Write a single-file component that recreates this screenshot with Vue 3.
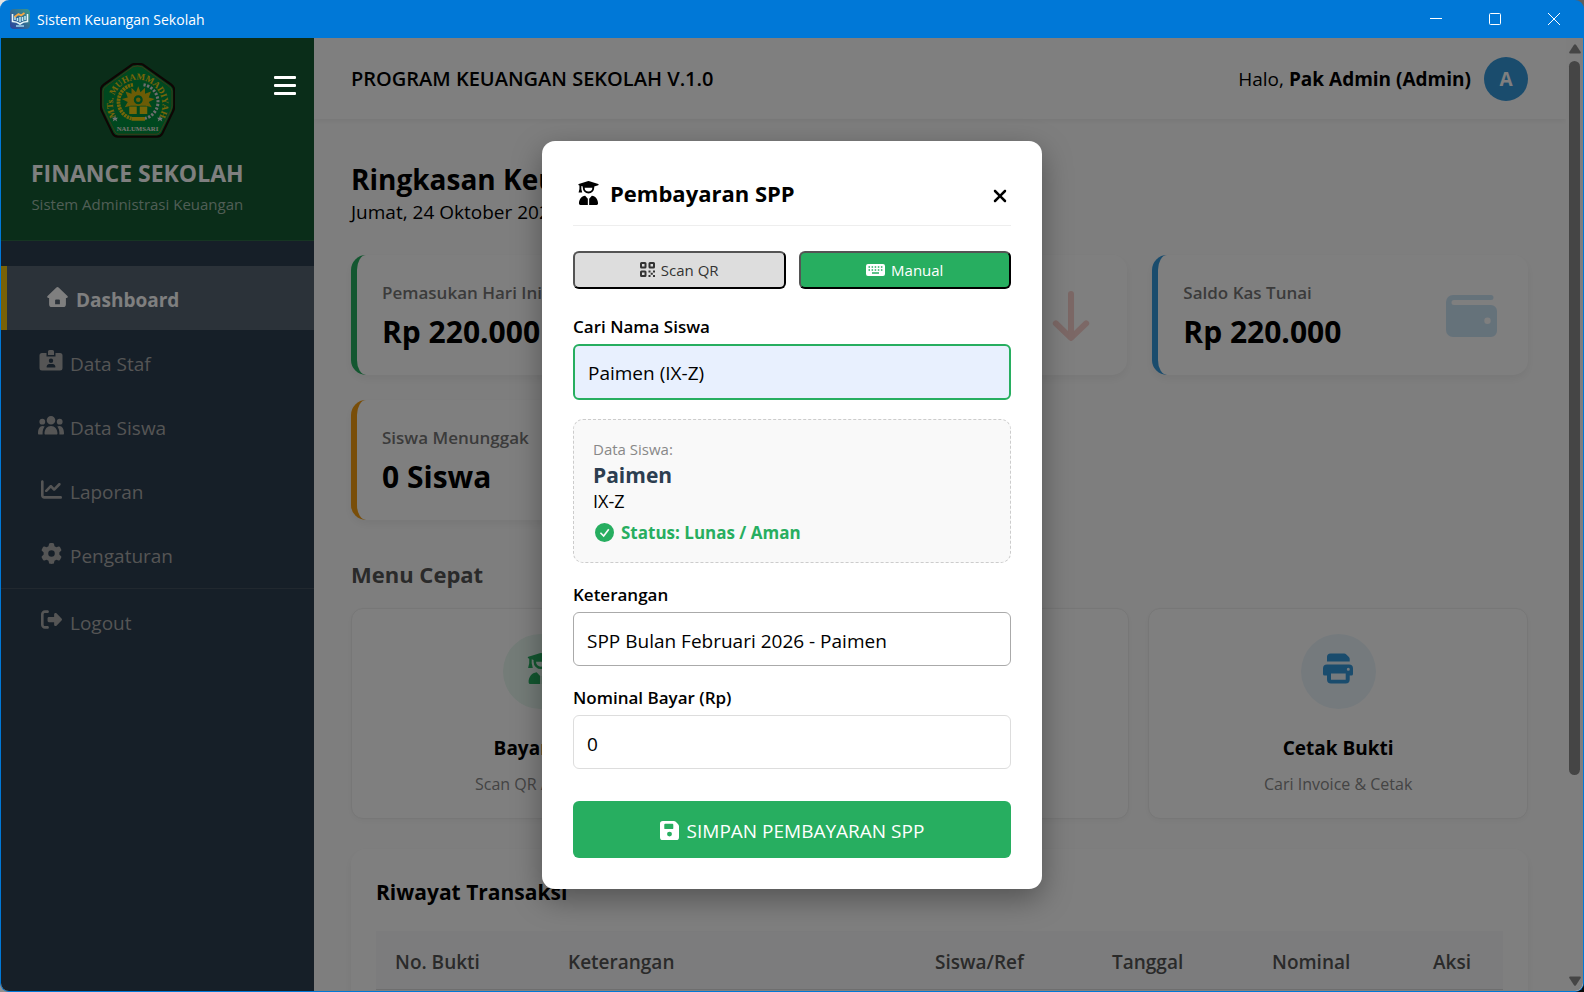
<script setup>
import { ref, reactive } from 'vue';

// Ikon satu warna: [viewBox, path]
const icons = {
    home: ['0 0 22 22', 'M9.6.7a2 2 0 0 1 2.8 0l9 8.6c.9.9.3 2.2-.8 2.2h-.8V18a3 3 0 0 1-3 3H5.2a3 3 0 0 1-3-3v-6.500h-.8c-1.100 0-1.700-1.300-.8-2.200zM9.500 13a1 1 0 0 0-1 1v4h5v-4a1 1 0 0 0-1-1z'],
    staff: ['0 0 24 22', 'M9 1.500A1.500 1.500 0 0 1 10.500 0h3A1.500 1.500 0 0 1 15 1.500V5H9zM3 3h4.500v3.500h9V3H21a2.500 2.500 0 0 1 2.500 2.500V18a2.500 2.500 0 0 1-2.500 2.500H3A2.500 2.500 0 0 1 .5 18V5.500A2.500 2.500 0 0 1 3 3zM12 8.500a2.200 2.200 0 1 0 0 4.400 2.200 2.200 0 0 0 0-4.400zM10.500 14A2.800 2.800 0 0 0 7.700 17.500h8.600A2.800 2.800 0 0 0 13.500 14z'],
    users: ['0 0 26 19', 'M13 0a4.300 4.300 0 1 1 0 8.600A4.300 4.300 0 0 1 13 0zM4.300 2.800a2.900 2.900 0 1 1 0 5.800 2.900 2.900 0 0 1 0-5.800zM21.700 2.800a2.900 2.900 0 1 1 0 5.800 2.900 2.900 0 0 1 0-5.800zM6.500 17.500C6.500 13 9.200 10 13 10s6.500 3 6.500 7.500c0 .5-.4 1-1 1h-11c-.6 0-1-.5-1-1zM0 17.500C0 12.800 1.800 10 4.500 10c.8 0 1.600.2 2.200.5C5.200 12.300 4.500 14.500 4.600 18.500H1c-.6 0-1-.4-1-1zM26 17.500C26 12.800 24.200 10 21.500 10c-.8 0-1.600.2-2.200.5 1.500 1.800 2.200 4 2.100 8H25c.6 0 1-.4 1-1z'],
    chart: ['0 0 512 512', 'M64 64c0-17.7-14.3-32-32-32S0 46.3 0 64V400c0 44.2 35.8 80 80 80H480c17.7 0 32-14.3 32-32s-14.3-32-32-32H80c-8.8 0-16-7.2-16-16V64zm406.600 86.600c12.500-12.500 12.500-32.800 0-45.300s-32.800-12.500-45.300 0L320 210.700l-57.400-57.400c-12.500-12.500-32.800-12.500-45.300 0l-112 112c-12.500 12.500-12.500 32.800 0 45.300s32.800 12.500 45.300 0L240 221.300l57.400 57.400c12.500 12.500 32.800 12.500 45.300 0l128-128z'],
    gear: ['0 0 512 512', 'M495.9 166.6c3.2 8.7 .5 18.4-6.4 24.6l-43.3 39.4c1.1 8.3 1.7 16.8 1.7 25.4s-.6 17.1-1.7 25.4l43.3 39.4c6.9 6.2 9.6 15.9 6.4 24.6c-4.4 11.9-9.7 23.3-15.8 34.3l-4.7 8.1c-6.6 11-14 21.4-22.1 31.2c-5.9 7.2-15.7 9.6-24.5 6.8l-55.7-17.7c-13.4 10.3-28.2 18.9-44 25.4l-12.5 57.1c-2 9.1-9 16.3-18.2 17.8c-13.8 2.3-28 3.5-42.5 3.5s-28.7-1.2-42.5-3.5c-9.2-1.5-16.2-8.7-18.2-17.8l-12.5-57.1c-15.8-6.5-30.6-15.1-44-25.4L83.1 425.9c-8.8 2.8-18.6 .3-24.5-6.8c-8.1-9.8-15.5-20.2-22.1-31.2l-4.7-8.1c-6.1-11-11.4-22.4-15.8-34.3c-3.2-8.7-.5-18.4 6.4-24.6l43.3-39.4C64.6 273.1 64 264.6 64 256s.6-17.1 1.7-25.4L22.4 191.2c-6.9-6.2-9.6-15.9-6.4-24.6c4.4-11.9 9.7-23.3 15.8-34.3l4.7-8.1c6.6-11 14-21.4 22.1-31.2c5.9-7.2 15.7-9.6 24.5-6.8l55.7 17.7c13.4-10.3 28.2-18.9 44-25.4l12.5-57.1c2-9.1 9-16.3 18.2-17.8C227.3 1.2 241.5 0 256 0s28.7 1.2 42.5 3.5c9.2 1.5 16.2 8.7 18.2 17.8l12.5 57.1c15.8 6.5 30.6 15.1 44 25.4l55.7-17.7c8.8-2.8 18.6-.3 24.5 6.8c8.1 9.8 15.5 20.2 22.1 31.2l4.7 8.1c6.1 11 11.4 22.4 15.8 34.3zM256 336a80 80 0 1 0 0-160 80 80 0 1 0 0 160z'],
    logout: ['0 0 512 512', 'M377.9 105.9L500.7 228.7c7.2 7.2 11.3 17.1 11.3 27.3s-4.1 20.1-11.3 27.3L377.900 406.100c-6.400 6.400-15 9.900-24 9.900c-18.700 0-33.900-15.200-33.900-33.900l0-62.100-128 0c-17.700 0-32-14.300-32-32l0-64c0-17.700 14.300-32 32-32l128 0 0-62.100c0-18.700 15.200-33.900 33.900-33.900c9 0 17.600 3.600 24 9.900zM160 96L96 96c-17.700 0-32 14.300-32 32l0 256c0 17.700 14.300 32 32 32l64 0c17.700 0 32 14.300 32 32s-14.300 32-32 32l-64 0c-53 0-96-43-96-96L0 128C0 75 43 32 96 32l64 0c17.700 0 32 14.300 32 32s-14.300 32-32 32z'],
    student: ['0 0 22 25', 'M.8 3 10 .2a3.500 3.500 0 0 1 2 0L21.200 3c.6.2.6 1.100 0 1.300L17 5.600V7a6 6 0 0 1-12 0V5.600l-1.500-.5v3.200L4.400 12H.6l.9-3.700V4.600L.8 4.300C.2 4.100.2 3.200.8 3zM7 7a4 4 0 0 0 8 0z M7.500 15.500 10.300 18.500V25H2.500A1.500 1.500 0 0 1 1 23.500C1 19.500 3.500 16 7.500 15.500zM14.500 15.500 11.700 18.500V25h7.800a1.500 1.500 0 0 0 1.500-1.500c0-4-2.500-7.500-6.500-8z'],
    close: ['0 0 384 512', 'M342.6 150.6c12.5-12.5 12.5-32.8 0-45.3s-32.8-12.500-45.300 0L192 210.700 86.600 105.400c-12.500-12.500-32.800-12.500-45.300 0s-12.500 32.800 0 45.300L146.700 256 41.400 361.400c-12.500 12.500-12.500 32.800 0 45.300s32.800 12.500 45.300 0L192 301.300 297.400 406.600c12.500 12.500 32.800 12.500 45.300 0s12.500-32.800 0-45.300L237.300 256 342.600 150.600z'],
    qr: ['0 0 15 15', 'M1.500 0h3.500a1.500 1.500 0 0 1 1.500 1.500V5A1.500 1.500 0 0 1 5 6.500H1.500A1.500 1.500 0 0 1 0 5V1.500A1.500 1.500 0 0 1 1.500 0zM2 2v2.500h2.500V2zM10 0h3.500A1.500 1.500 0 0 1 15 1.500V5a1.500 1.500 0 0 1-1.500 1.500H10A1.500 1.500 0 0 1 8.500 5V1.500A1.500 1.500 0 0 1 10 0zM10.500 2v2.500H13V2zM1.500 8.500H5A1.500 1.500 0 0 1 6.500 10v3.500A1.500 1.500 0 0 1 5 15H1.500A1.500 1.500 0 0 1 0 13.500V10a1.500 1.500 0 0 1 1.500-1.500zM2 10.500V13h2.500v-2.500zM8.500 8.500h2v2h-2zM13 8.500h2v2h-2zM10.700 10.700h2.100v2.100h-2.100zM8.500 13h2v2h-2zM13 13h2v2h-2z'],
    keyboard: ['0 0 19 12', 'M2 0h15a2 2 0 0 1 2 2v8a2 2 0 0 1-2 2H2a2 2 0 0 1-2-2V2a2 2 0 0 1 2-2zM2.500 2.300v1.500H4V2.300zM5.600 2.300v1.500h1.500V2.300zM8.700 2.300v1.500h1.500V2.300zM11.800 2.300v1.500h1.500V2.300zM14.900 2.300v1.500h1.500V2.300zM2.500 5.200v1.500H4V5.200zM5.600 5.200v1.500h1.500V5.200zM8.700 5.200v1.500h1.500V5.200zM11.800 5.200v1.500h1.500V5.200zM14.900 5.200v1.500h1.500V5.200zM6 8.300v1.500h7V8.300z'],
    check: ['0 0 20 20', 'M10 0a10 10 0 1 1 0 20 10 10 0 0 1 0-20zM13.800 6 9 12.400 6.300 9.700 5.100 10.900 9.200 15 15.200 7z'],
    save: ['0 0 20 20', 'M3 0h11.500a3 3 0 0 1 2.100.9l2.500 2.500A3 3 0 0 1 20 5.500V17a3 3 0 0 1-3 3H3a3 3 0 0 1-3-3V3a3 3 0 0 1 3-3zM5.500 3A1 1 0 0 0 4.500 4v3.500a1 1 0 0 0 1 1h7.500a1 1 0 0 0 1-1V4a1 1 0 0 0-1-1zM10 11.200a2.600 2.600 0 1 0 0 5.200 2.600 2.600 0 0 0 0-5.200z'],
    down: ['0 0 38 50', 'M19 0a3 3 0 0 1 3 3v37l10-9.700a3 3 0 0 1 4.300 4.300L21.100 49.100a3 3 0 0 1-4.200 0L1.700 34.600A3 3 0 0 1 6 30.300L16 40V3a3 3 0 0 1 3-3z'],
    up: ['0 0 38 50', 'M19 50a3 3 0 0 0 3-3V10l10 9.700a3 3 0 0 0 4.300-4.300L21.100.9a3 3 0 0 0-4.200 0L1.700 15.400A3 3 0 0 0 6 19.700L16 10v37a3 3 0 0 0 3 3z'],
    wallet: ['0 0 51 42', 'M7 0h38a2.500 2.500 0 0 1 0 5H8a2.500 2.500 0 0 0 0 5h37a6 6 0 0 1 6 6v20a6 6 0 0 1-6 6H7a7 7 0 0 1-7-7V7a7 7 0 0 1 7-7zM41.500 22.500a3.200 3.200 0 1 0 0 6.400 3.200 3.200 0 0 0 0-6.400z'],
    alert: ['0 0 50 46', 'M25 0a4 4 0 0 1 3.500 2L49.400 40a4 4 0 0 1-3.500 6H4.100a4 4 0 0 1-3.500-6L21.500 2A4 4 0 0 1 25 0zM23 14v16h4V14zM22 34v5h6v-5z'],
    print: ['0 0 30 30', 'M7.500 0h13.700a3 3 0 0 1 2.100.9l2.600 2.600a3 3 0 0 1 .8 2.100V8H4V3.500A3.500 3.500 0 0 1 7.500 0zM4 11h22a4 4 0 0 1 4 4v5.500a1.500 1.500 0 0 1-1.500 1.500H26.700v4a4 4 0 0 1-4 4H8a4 4 0 0 1-4-4v-4H1.500A1.500 1.500 0 0 1 0 20.500V15a4 4 0 0 1 4-4zM8 20v6.200h14.700V20zM25.300 14.300a1.500 1.500 0 1 0 0 3 1.500 1.500 0 0 0 0-3z'],
};

const navItems = [
    { label: 'Dashboard', icon: 'home' },
    { label: 'Data Staf', icon: 'staff' },
    { label: 'Data Siswa', icon: 'users' },
    { label: 'Laporan', icon: 'chart' },
    { label: 'Pengaturan', icon: 'gear' },
];
const activeNav = ref('Dashboard');

const stats = [
    { label: 'Pemasukan Hari Ini', value: 'Rp 220.000', tone: 'green', icon: 'up' },
    { label: 'Pengeluaran Hari Ini', value: 'Rp 0', tone: 'red', icon: 'down' },
    { label: 'Saldo Kas Tunai', value: 'Rp 220.000', tone: 'blue', icon: 'wallet' },
    { label: 'Siswa Menunggak', value: '0 Siswa', tone: 'orange', icon: 'alert' },
];

const quickMenu = [
    { title: 'Bayar SPP', desc: 'Scan QR / Manual', tone: 'green', icon: 'student' },
    { title: 'Pengeluaran', desc: 'Catat Biaya', tone: 'red', icon: 'down' },
    { title: 'Cetak Bukti', desc: 'Cari Invoice & Cetak', tone: 'blue', icon: 'print' },
];

const showModal = ref(true);
const mode = ref('manual');
const form = reactive({
    siswa: 'Paimen (IX-Z)',
    keterangan: 'SPP Bulan Februari 2026 - Paimen',
    nominal: '0',
});
</script>

<template>
    <div class="window">
        <div class="titlebar">
            <svg class="app-icon" viewBox="0 0 20 20">
                <defs>
                    <linearGradient id="appBg" x1="0" y1="1" x2="1" y2="0">
                        <stop offset="0" stop-color="#2b3f9e" />
                        <stop offset="1" stop-color="#3a9a8c" />
                    </linearGradient>
                </defs>
                <rect width="20" height="20" rx="4" fill="url(#appBg)" />
                <path d="M2.500 5v7.500c3 0 5 .6 7.500 2.500 2.500-1.900 4.500-2.500 7.500-2.500V5" fill="none" stroke="#e6f6fa" stroke-width="1.600" />
                <path d="M5 7v4M7.500 9v3M10 8v5M12.500 8v4M15 7v4" stroke="#bfe9f2" stroke-width="1.500" />
                <path d="m4.500 8 4-3 2.500 1.500L14.500 4" fill="none" stroke="#f5a843" stroke-width="1.800" />
                <path d="M6 17h8" stroke="#9fd4ee" stroke-width="1.500" />
            </svg>
            <span class="window-title">Sistem Keuangan Sekolah</span>
            <div class="window-controls">
                <button aria-label="Minimize"><svg viewBox="0 0 12 12"><path d="M0 5.500h12" /></svg></button>
                <button aria-label="Maximize"><svg viewBox="0 0 12 12"><rect x=".5" y=".5" width="11" height="11" rx="1" /></svg></button>
                <button aria-label="Close"><svg viewBox="0 0 12 12"><path d="m0 0 12 12M12 0 0 12" /></svg></button>
            </div>
        </div>

        <div class="app">
            <aside class="sidebar">
                <div class="sidebar-header">
                    <div class="brand">
                        <!-- Lambang sekolah -->
                        <svg class="logo" viewBox="0 0 100 100">
                            <defs>
                                <path id="arcTop" d="M20 69A33 33 0 1 1 80 69" />
                            </defs>
                            <path d="M43 2q7-2 14 0L95 29q4 3 4 8v20q0 4-2 8L83 94q-2 4-7 4H24q-5 0-7-4L3 65q-2-4-2-8V37q0-5 4-8z" fill="#00903e" stroke="#1c0c08" stroke-width="3" />
                            <path d="M44 5q6-2 12 0l36 26q4 3 4 7v19q0 3-2 7L80 92q-2 3-5 3H25q-3 0-5-3L6 64q-2-4-2-7V38q0-4 4-7z" fill="none" stroke="#a3632a" stroke-width="1" />
                            <text class="logo-arc"><textPath href="#arcTop" startOffset="50%" text-anchor="middle">MTs. MUHAMMADIYAH</textPath></text>
                            <path d="M44 29A23 23 0 0 0 42 74" fill="none" stroke="#e8cb10" stroke-width="5" stroke-dasharray="3 1" />
                            <path d="M58 29A23 23 0 0 1 60 74" fill="none" stroke="#dcdcdc" stroke-width="4" stroke-dasharray="3 2" />
                            <path d="m51 31 3 8 6-6v8l8-3-3 8 8 2-8 4 4 7-8-2H41l-8 2 4-7-8-4 8-2-3-8 8 3v-8l6 6z" fill="#d9b80c" />
                            <circle cx="51" cy="49" r="7" fill="#00903e" stroke="#d9b80c" stroke-width="2" />
                            <circle cx="51" cy="49" r="3" fill="#d9b80c" />
                            <path d="M39 58h10v10H39zM53 58h10v10H53zM42 72h18v5H42z" fill="#f1cc10" />
                            <path d="m20 70 1 3h3l-2 2 1 3-3-2-3 2 1-3-2-2h3zM80 70l1 3h3l-2 2 1 3-3-2-3 2 1-3-2-2h3z" fill="#e6e6e6" />
                            <text class="logo-base" x="50" y="91" text-anchor="middle">NALUMSARI</text>
                        </svg>
                        <h1>FINANCE SEKOLAH</h1>
                        <p>Sistem Administrasi Keuangan</p>
                    </div>
                    <button class="menu-toggle" aria-label="Menu"><span></span><span></span><span></span></button>
                </div>
                <nav>
                    <a
                        v-for="item in navItems"
                        :key="item.label"
                        href="#"
                        class="nav-link"
                        :class="{ active: activeNav === item.label }"
                        @click.prevent="activeNav = item.label"
                    >
                        <span class="nav-icon"><svg :class="item.icon" :viewBox="icons[item.icon][0]"><path :d="icons[item.icon][1]" /></svg></span>
                        {{ item.label }}
                    </a>
                    <a href="#" class="nav-link logout-link">
                        <span class="nav-icon"><svg :viewBox="icons.logout[0]"><path :d="icons.logout[1]" /></svg></span>
                        Logout
                    </a>
                </nav>
            </aside>

            <main class="main">
                <header class="topbar">
                    <strong class="program">PROGRAM KEUANGAN SEKOLAH V.1.0</strong>
                    <div class="user">
                        <span>Halo, <b>Pak Admin (Admin)</b></span>
                        <span class="avatar">A</span>
                    </div>
                </header>

                <div class="content">
                    <h2 class="page-title">Ringkasan Keuangan</h2>
                    <p class="date">Jumat, 24 Oktober 2025</p>

                    <div class="stats">
                        <div v-for="s in stats" :key="s.label" class="stat" :class="s.tone">
                            <div>
                                <div class="stat-label">{{ s.label }}</div>
                                <div class="stat-value">{{ s.value }}</div>
                            </div>
                            <svg :class="s.icon" :viewBox="icons[s.icon][0]"><path :d="icons[s.icon][1]" /></svg>
                        </div>
                    </div>

                    <h3 class="section-title">Menu Cepat</h3>
                    <div class="quick">
                        <button v-for="q in quickMenu" :key="q.title" class="quick-card" @click="showModal = true">
                            <span class="quick-icon" :class="q.tone"><svg :viewBox="icons[q.icon][0]"><path :d="icons[q.icon][1]" /></svg></span>
                            <span class="quick-title">{{ q.title }}</span>
                            <span class="quick-desc">{{ q.desc }}</span>
                        </button>
                    </div>

                    <section class="history">
                        <h3>Riwayat Transaksi</h3>
                        <table>
                            <thead>
                                <tr>
                                    <th class="col-no">No. Bukti</th>
                                    <th>Keterangan</th>
                                    <th class="col-ref">Siswa/Ref</th>
                                    <th class="col-date">Tanggal</th>
                                    <th class="col-amount">Nominal</th>
                                    <th class="col-action">Aksi</th>
                                </tr>
                            </thead>
                        </table>
                    </section>
                </div>
            </main>

            <div class="scrollbar">
                <svg viewBox="0 0 12 10"><path d="M5 .8q1-1.300 2 0l4.700 7.200q.6 1.500-1 1.500H1.300q-1.600 0-1-1.500z" /></svg>
                <div class="track"><div class="thumb"></div></div>
                <svg viewBox="0 0 12 10"><path d="M5 9.200q1 1.300 2 0L11.700 2q.6-1.500-1-1.500H1.300Q-.3.5.3 2z" /></svg>
            </div>

            <div v-if="showModal" class="overlay">
                <form class="modal" @submit.prevent>
                    <div class="modal-header">
                        <h2>
                            <svg :viewBox="icons.student[0]"><path :d="icons.student[1]" /></svg>
                            Pembayaran SPP
                        </h2>
                        <button type="button" class="close" aria-label="Tutup" @click="showModal = false">
                            <svg :viewBox="icons.close[0]"><path :d="icons.close[1]" /></svg>
                        </button>
                    </div>

                    <div class="tabs">
                        <button type="button" :class="{ on: mode === 'scan' }" @click="mode = 'scan'">
                            <svg class="qr" :viewBox="icons.qr[0]"><path :d="icons.qr[1]" /></svg>
                            Scan QR
                        </button>
                        <button type="button" :class="{ on: mode === 'manual' }" @click="mode = 'manual'">
                            <svg class="keyboard" :viewBox="icons.keyboard[0]"><path :d="icons.keyboard[1]" /></svg>
                            Manual
                        </button>
                    </div>

                    <label for="siswa">Cari Nama Siswa</label>
                    <input id="siswa" v-model="form.siswa" class="search" type="text" />

                    <div class="student">
                        <div class="student-caption">Data Siswa:</div>
                        <div class="student-name">Paimen</div>
                        <div class="student-class">IX-Z</div>
                        <div class="student-status">
                            <svg :viewBox="icons.check[0]"><path :d="icons.check[1]" /></svg>
                            Status: Lunas / Aman
                        </div>
                    </div>

                    <label for="keterangan">Keterangan</label>
                    <input id="keterangan" v-model="form.keterangan" class="note" type="text" />

                    <label for="nominal">Nominal Bayar (Rp)</label>
                    <input id="nominal" v-model="form.nominal" type="text" inputmode="numeric" />

                    <button type="submit" class="submit">
                        <svg :viewBox="icons.save[0]"><path :d="icons.save[1]" /></svg>
                        SIMPAN PEMBAYARAN SPP
                    </button>
                </form>
            </div>
        </div>
    </div>
</template>

<style>
body {
    margin: 0;
    background: linear-gradient(135deg, #e4e4e4, #0a0a0a);
}
</style>

<style scoped>
* {
    box-sizing: border-box;
}

h1,
h2,
h3,
p {
    margin: 0;
}

button,
input {
    font-family: inherit;
}

svg {
    display: block;
    flex: none;
    fill: currentColor;
    fill-rule: evenodd;
}

.window {
    display: flex;
    flex-direction: column;
    height: 100vh;
    overflow: hidden;
    border: 1px solid #0078d7;
    border-top: 0;
    border-radius: 9px;
    background: #0078d7;
    color: #000;
    font-family: 'Segoe UI', 'Open Sans', 'Noto Sans', sans-serif;
    font-size: 19px;
}

/* Bilah judul */
.titlebar {
    display: flex;
    flex: none;
    align-items: center;
    height: 38px;
    padding-left: 9px;
    color: #fff;
}

.app-icon {
    width: 20px;
    height: 20px;
}

.window-title {
    margin-left: 7px;
    font-size: 14px;
}

.window-controls {
    display: flex;
    height: 100%;
    margin-left: auto;
}

.window-controls button {
    display: grid;
    place-items: center;
    width: 59px;
    padding: 0;
    border: 0;
    background: none;
    color: #fff;
}

.window-controls svg {
    width: 12px;
    height: 12px;
    overflow: visible;
    fill: none;
    stroke: #fff;
}

.app {
    position: relative;
    display: flex;
    flex: 1;
    min-height: 0;
    background: #fdfdfd;
}

/* Sidebar */
.sidebar {
    flex: none;
    width: 313px;
    background: #2c3e50;
}

.sidebar-header {
    display: flex;
    align-items: flex-start;
    justify-content: space-between;
    padding: 25px 18px 24px 30px;
    border-bottom: 1px solid #2c6b47;
    background: #145a32;
}

.brand {
    display: flex;
    flex-direction: column;
    align-items: center;
    white-space: nowrap;
}

.logo {
    width: 75px;
    height: 75px;
}

.logo-arc {
    fill: #f1cc10;
    font: bold 12px 'Liberation Serif', serif;
}

.logo-base {
    fill: #f0e8e0;
    font: bold 9px 'Liberation Serif', serif;
}

.brand h1 {
    margin-top: 20px;
    color: #fff;
    font-size: 23px;
    font-weight: 700;
    line-height: 30px;
}

.brand p {
    margin-top: 4px;
    color: #a1bdac;
    font-size: 15px;
    line-height: 24px;
}

.menu-toggle {
    position: relative;
    z-index: 20;
    display: flex;
    flex-direction: column;
    gap: 5px;
    width: 22px;
    margin-top: 13px;
    padding: 0;
    border: 0;
    background: none;
}

.menu-toggle span {
    height: 3px;
    border-radius: 1px;
    background: #fff;
}

nav {
    padding-top: 25px;
}

.nav-link {
    display: flex;
    align-items: center;
    height: 64px;
    padding: 4px 0 0 36px;
    color: #aaa;
    text-decoration: none;
}

.nav-link.active {
    border-left: 6px solid #f1c40f;
    background: rgba(255, 255, 255, 0.2);
    color: #fff;
    font-weight: 700;
}

.nav-icon {
    display: grid;
    place-items: center;
    width: 28px;
    margin-right: 5px;
    padding-bottom: 6px;
}

.nav-icon svg {
    width: 21px;
    height: 21px;
}

.nav-icon svg.staff {
    width: 24px;
    height: 22px;
}

.nav-icon svg.users {
    width: 26px;
    height: 19px;
}

.logout-link {
    margin-top: 2px;
    border-top: 1px solid #42515f;
}

/* Area utama */
.main {
    flex: 1;
    min-width: 0;
    overflow: hidden;
}

.topbar {
    display: flex;
    align-items: center;
    justify-content: space-between;
    height: 81px;
    padding: 0 38px 0 37px;
    background: #fff;
    box-shadow: 0 2px 6px rgba(0, 0, 0, 0.06);
}

.program {
    font-size: 20px;
    font-weight: 600;
}

.user {
    display: flex;
    align-items: center;
    gap: 13px;
}

.user b {
    font-weight: 700;
}

.avatar {
    display: grid;
    place-items: center;
    width: 44px;
    height: 44px;
    border-radius: 50%;
    background: #3498db;
    color: #fff;
    font-weight: 700;
}

.content {
    padding: 40px 38px 38px 37px;
}

.page-title {
    font-size: 28px;
    font-weight: 700;
    line-height: 40px;
}

.date {
    line-height: 26px;
}

.stats {
    display: grid;
    grid-template-columns: repeat(3, 1fr);
    gap: 25px;
    margin-top: 30px;
}

.stat {
    display: flex;
    align-items: center;
    justify-content: space-between;
    height: 120px;
    padding: 2px 31px 0 25px;
    border-left: 6px solid;
    border-radius: 15px;
    background: #fff;
    box-shadow: 0 4px 10px rgba(0, 0, 0, 0.06);
}

.stat.green { border-color: #27ae60; }
.stat.red { border-color: #e74c3c; }
.stat.blue { border-color: #3498db; }
.stat.orange { border-color: #f39c12; }

.stat svg {
    width: 50px;
    height: 46px;
    opacity: 0.25;
}

.stat svg.up,
.stat svg.down {
    width: 38px;
    height: 50px;
    margin-right: 6px;
}

.stat svg.wallet {
    width: 51px;
    height: 42px;
}

.stat.green svg { color: #27ae60; }
.stat.red svg { color: #e74c3c; }
.stat.blue svg { color: #3498db; }
.stat.orange svg { color: #f39c12; }

.stat-label {
    margin-bottom: 7px;
    color: #777;
    font-size: 17px;
    font-weight: 600;
    line-height: 24px;
}

.stat-value {
    font-size: 30px;
    font-weight: 700;
    line-height: 40px;
}

.section-title {
    margin: 39px 0 19px;
    color: #555;
    font-size: 22px;
    font-weight: 700;
    line-height: 30px;
}

.quick {
    display: grid;
    grid-template-columns: repeat(3, 1fr);
    gap: 19px;
}

.quick-card {
    display: flex;
    flex-direction: column;
    align-items: center;
    padding: 25px 12px 22px;
    border: 1px solid #eee;
    border-radius: 12px;
    background: #fff;
    box-shadow: 0 2px 6px rgba(0, 0, 0, 0.04);
    color: #000;
}

.quick-icon {
    display: grid;
    place-items: center;
    width: 75px;
    height: 75px;
    padding-bottom: 6px;
    border-radius: 50%;
}

.quick-icon svg {
    width: 30px;
    height: 31px;
}

.quick-icon.green { background: #e8f8f0; color: #27ae60; }
.quick-icon.red { background: #fdedec; color: #e74c3c; }
.quick-icon.blue { background: #ebf5fb; color: #3498db; }

.quick-title {
    margin-top: 25px;
    font-size: 19px;
    font-weight: 700;
    line-height: 28px;
}

.quick-desc {
    margin-top: 10px;
    color: #888;
    font-size: 16px;
    line-height: 24px;
}

.history {
    margin-top: 30px;
    padding: 25px;
    border-radius: 15px;
    background: #fff;
    box-shadow: 0 4px 10px rgba(0, 0, 0, 0.06);
}

.history h3 {
    margin-bottom: 21px;
    font-size: 21px;
    font-weight: 700;
    line-height: 36px;
}

.history table {
    width: 100%;
    border-collapse: collapse;
    table-layout: fixed;
}

.history th {
    height: 58px;
    padding: 4px 0 0 19px;
    border-bottom: 1px solid #ddd;
    background: #f8f9fa;
    color: #555;
    font-weight: 600;
    text-align: left;
}

.col-no { width: 173px; }
.col-ref { width: 177px; }
.col-date { width: 160px; }
.col-amount { width: 161px; }
.col-action { width: 89px; }

.scrollbar {
    display: flex;
    flex: none;
    flex-direction: column;
    align-items: center;
    width: 17px;
    padding: 6px 0 5px;
    background: #fcfcfc;
    color: #8b8b8b;
}

.scrollbar svg {
    width: 12px;
    height: 10px;
}

.track {
    flex: 1;
    width: 11px;
    padding-top: 7px;
}

.thumb {
    height: 78%;
    border-radius: 6px;
    background: #8b8b8b;
}

/* Modal pembayaran */
.overlay {
    position: absolute;
    inset: 0;
    z-index: 10;
    display: flex;
    align-items: center;
    justify-content: center;
    background: rgba(0, 0, 0, 0.5);
}

.modal {
    display: flex;
    flex-direction: column;
    width: 500px;
    padding: 31px;
    border-radius: 13px;
    background: #fff;
    box-shadow: 0 10px 30px rgba(0, 0, 0, 0.35);
}

.modal-header {
    display: flex;
    align-items: flex-start;
    justify-content: space-between;
    height: 54px;
    margin-bottom: 25px;
    padding: 4px 3px 0 5px;
    border-bottom: 1px solid #eee;
}

.modal-header h2 {
    display: flex;
    align-items: center;
    gap: 11px;
    font-size: 22px;
    font-weight: 700;
    line-height: 34px;
}

.modal-header h2 svg {
    width: 21px;
    height: 24px;
}

.close {
    padding: 10px 0 0;
    border: 0;
    background: none;
    color: #000;
}

.close svg {
    width: 16px;
    height: 20px;
}

.tabs {
    display: flex;
    gap: 13px;
    margin-bottom: 25px;
}

.tabs button {
    display: flex;
    flex: 1;
    align-items: center;
    justify-content: center;
    gap: 6px;
    height: 38px;
    padding: 0;
    border: 2px outset #000;
    border-radius: 6px;
    background: #ddd;
    color: #333;
    font-size: 15px;
}

.tabs button.on {
    background: #27ae60;
    color: #fff;
}

.tabs .qr {
    width: 15px;
    height: 15px;
}

.tabs .keyboard {
    width: 19px;
    height: 12px;
}

label {
    margin-bottom: 5px;
    font-size: 17px;
    font-weight: 600;
    line-height: 25px;
}

input {
    width: 100%;
    height: 54px;
    margin: 0 0 19px;
    padding: 4px 13px 0;
    border: 1px solid #ddd;
    border-radius: 6px;
    outline: 0;
    background: #fff;
    color: #000;
    font-size: 19px;
}

input.search {
    height: 56px;
    padding-top: 2px;
    border: 2px solid #27ae60;
    background: #e8f0fe;
}

input.note {
    border-color: #aaa;
}

.student {
    margin-bottom: 19px;
    padding: 17px 19px 15px;
    border: 1px dashed #ccc;
    border-radius: 10px;
    background: #f9f9f9;
}

.student-caption {
    color: #888;
    font-size: 15px;
    line-height: 24px;
}

.student-name {
    color: #2c3e50;
    font-size: 21px;
    font-weight: 700;
    line-height: 28px;
}

.student-class {
    font-size: 18px;
    line-height: 24px;
}

.student-status {
    display: flex;
    align-items: center;
    gap: 7px;
    margin-top: 6px;
    padding-left: 2px;
    color: #27ae60;
    font-size: 17px;
    font-weight: 700;
    line-height: 28px;
}

.student-status svg {
    width: 19px;
    height: 19px;
}

.submit {
    display: flex;
    align-items: center;
    justify-content: center;
    gap: 8px;
    height: 57px;
    margin-top: 13px;
    padding-top: 4px;
    border: 0;
    border-radius: 6px;
    background: #27ae60;
    color: #fff;
    font-size: 19px;
}

.submit svg {
    width: 19px;
    height: 19px;
}
</style>
